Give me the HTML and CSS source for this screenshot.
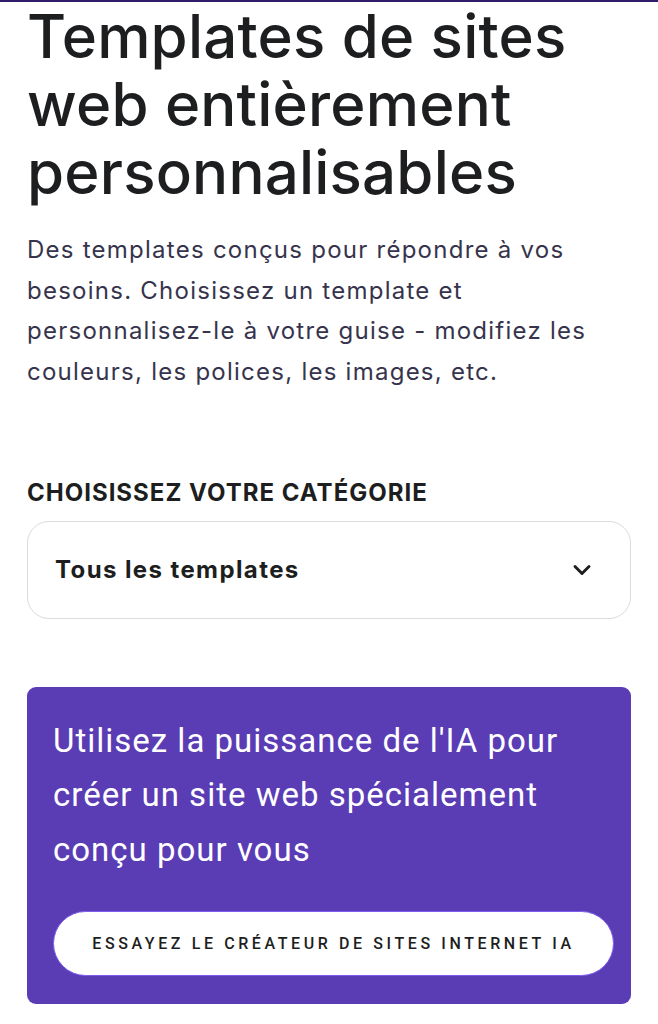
FILE: index.html
```html
<!DOCTYPE html>
<html lang="fr">
<head>
<meta charset="utf-8">
<link rel="stylesheet" href="styles.css">
</head>
<body>
<div class="topline"></div>
<main class="page">
  <h1 class="title">Templates de sites web entièrement personnalisables</h1>
  <p class="intro">Des templates conçus pour répondre à vos besoins. Choisissez un template et personnalisez-le à votre guise - modifiez les couleurs, les polices, les images, etc.</p>
  <section class="category">
    <h2 class="label">CHOISISSEZ VOTRE CATÉGORIE</h2>
    <div class="select">
      <span class="select-text">Tous les templates</span>
      <svg class="chevron" width="28" height="28" viewBox="0 0 24 24" fill="none" stroke="#1d1e20" stroke-width="2.5" stroke-linecap="round" stroke-linejoin="round"><path d="M6 9l6 6 6-6"/></svg>
    </div>
  </section>
  <section class="ai-card">
    <p class="ai-text">Utilisez la puissance de l'IA pour créer un site web spécialement conçu pour vous</p>
    <a class="ai-button">ESSAYEZ LE CRÉATEUR DE SITES INTERNET IA</a>
  </section>
</main>
</body>
</html>
```
FILE: styles.css
```css
html, body {
  margin: 0;
  padding: 0;
  background: #ffffff;
}
body {
  font-family: "Inter", "Roboto", sans-serif;
  color: #1d1e20;
}
.topline {
  height: 2px;
  background: #2f1c6a;
}
.page {
  padding: 0 27px;
  display: flex;
  flex-direction: column;
}
.title {
  margin: 0;
  font-size: 60px;
  line-height: 68px;
  font-weight: 500;
  letter-spacing: 0.2px;
  color: #1d1e20;
}
.intro {
  margin: 24px 0 0;
  font-size: 24px;
  line-height: 40.7px;
  letter-spacing: 1.25px;
  color: #36344d;
  font-weight: 400;
}
.category {
  margin-top: 84px;
}
.label {
  margin: 0;
  font-size: 24px;
  line-height: 32px;
  font-weight: 700;
  letter-spacing: 1px;
  color: #1d1e20;
}
.select {
  margin-top: 12px;
  height: 98px;
  box-sizing: border-box;
  border: 1.5px solid #dadce0;
  border-radius: 22px;
  display: flex;
  align-items: center;
  justify-content: space-between;
  padding: 0 34px 0 27px;
}
.select-text {
  font-size: 24px;
  font-weight: 700;
  letter-spacing: 1.4px;
}
.ai-card {
  margin-top: 68px;
  background: #5a3cb5;
  border-radius: 9px;
  padding: 27px 17px 28px 26px;
  display: flex;
  flex-direction: column;
}
.ai-text {
  margin: 0;
  max-width: 545px;
  color: #ffffff;
  font-size: 33px;
  line-height: 54.5px;
  letter-spacing: 1px;
  font-family: "Roboto", sans-serif;
  font-weight: 400;
}
.ai-button {
  margin-top: 34px;
  height: 65px;
  box-sizing: border-box;
  background: #ffffff;
  border: 1.5px solid #7d5cf0;
  border-radius: 33px;
  display: flex;
  align-items: center;
  justify-content: center;
  font-family: "Roboto", sans-serif;
  font-size: 16px;
  font-weight: 500;
  letter-spacing: 3.6px;
  color: #1d1e20;
}
```
